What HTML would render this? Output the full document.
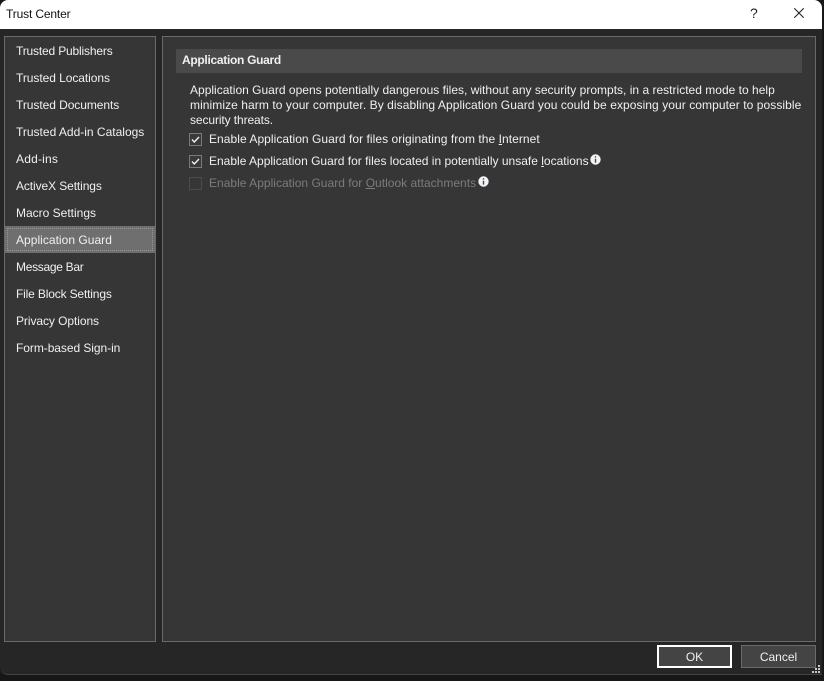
<!DOCTYPE html>
<html>
<head>
<meta charset="utf-8">
<style>
html,body{margin:0;padding:0;width:824px;height:681px;overflow:hidden;background:#171717;}
*{box-sizing:border-box;}
body{position:relative;font-family:"Liberation Sans",sans-serif;font-size:12px;color:#f0f0f0;}
.a{position:absolute;white-space:nowrap;}
.win{position:absolute;left:0;top:0;width:822px;height:675px;background:#262626;border-bottom:1px solid #444;border-radius:8px 8px 0 8px;overflow:hidden;}
.title{position:absolute;left:0;top:0;width:100%;height:29px;background:#fff;}
.panel{position:absolute;background:#363636;border:1px solid #6a6a6a;}
.nav{line-height:16px;}
.t{line-height:15px;}
.cb{position:absolute;width:13px;height:13px;border:1px solid #7a7a7a;background:#3a3a3a;}
u{text-underline-offset:1px;}
</style>
</head>
<body>
<div class="win">
  <div class="title"></div>
  <div class="a" style="left:6px;top:6px;color:#111;line-height:16px;letter-spacing:-.15px;">Trust Center</div>
  <div class="a" style="left:750px;top:5px;color:#222;font-size:14px;line-height:16px;">?</div>
  <svg class="a" style="left:794px;top:8px" width="10" height="10" viewBox="0 0 10 10"><path d="M.3.3 9.7 9.7M9.7.3.3 9.7" stroke="#222" stroke-width="1.1" fill="none"/></svg>

  <div class="panel" style="left:4px;top:36px;width:152px;height:606px;"></div>
  <div class="panel" style="left:162px;top:36px;width:654px;height:606px;"></div>

  <div class="a" style="left:5px;top:226px;width:150px;height:27px;background:#6f6f6f;"></div>
  <div class="a" style="left:7px;top:228px;width:146px;height:23px;border:1px dotted #949494;"></div>

  <div class="a nav" style="left:16px;top:43px;letter-spacing:-.17px;">Trusted Publishers</div>
  <div class="a nav" style="left:16px;top:70px;letter-spacing:-.06px;">Trusted Locations</div>
  <div class="a nav" style="left:16px;top:97px;letter-spacing:-.06px;">Trusted Documents</div>
  <div class="a nav" style="left:16px;top:124px;">Trusted Add-in Catalogs</div>
  <div class="a nav" style="left:16px;top:151px;letter-spacing:.2px;">Add-ins</div>
  <div class="a nav" style="left:16px;top:178px;letter-spacing:-.1px;">ActiveX Settings</div>
  <div class="a nav" style="left:16px;top:205px;">Macro Settings</div>
  <div class="a nav" style="left:16px;top:232px;letter-spacing:.03px;">Application Guard</div>
  <div class="a nav" style="left:16px;top:259px;letter-spacing:-.3px;">Message Bar</div>
  <div class="a nav" style="left:16px;top:286px;letter-spacing:-.16px;">File Block Settings</div>
  <div class="a nav" style="left:16px;top:313px;letter-spacing:-.07px;">Privacy Options</div>
  <div class="a nav" style="left:16px;top:340px;letter-spacing:-.06px;">Form-based Sign-in</div>

  <div class="a" style="left:176px;top:49px;width:626px;height:24px;background:#4a4a4a;"></div>
  <div class="a" style="left:182px;top:52px;line-height:16px;font-weight:bold;letter-spacing:-.3px;">Application Guard</div>

  <div class="a t" style="left:190px;top:83px;letter-spacing:.01px;">Application Guard opens potentially dangerous files, without any security prompts, in a restricted mode to help</div>
  <div class="a t" style="left:190px;top:98px;letter-spacing:.07px;">minimize harm to your computer. By disabling Application Guard you could be exposing your computer to possible</div>
  <div class="a t" style="left:190px;top:113px;letter-spacing:-.1px;">security threats.</div>

  <div class="cb" style="left:189px;top:133px;"></div>
  <svg class="a" style="left:189px;top:133px" width="13" height="13" viewBox="0 0 13 13"><path d="M3 6.5 5.3 9 10 4" stroke="#f2f2f2" stroke-width="1.4" fill="none"/></svg>
  <div class="a t" style="left:209px;top:132px;letter-spacing:.05px;">Enable Application Guard for files originating from the <u>I</u>nternet</div>

  <div class="cb" style="left:189px;top:155px;"></div>
  <svg class="a" style="left:189px;top:155px" width="13" height="13" viewBox="0 0 13 13"><path d="M3 6.5 5.3 9 10 4" stroke="#f2f2f2" stroke-width="1.4" fill="none"/></svg>
  <div class="a t" style="left:209px;top:154px;">Enable Application Guard for files located in potentially unsafe <u>l</u>ocations</div>
  <svg class="a" style="left:590px;top:154px" width="11" height="11" viewBox="0 0 11 11"><circle cx="5.5" cy="5.5" r="5.2" fill="#f4f4f4"/><path d="M5.5 2.2v1.4M5.5 4.8V8.6" stroke="#2a4a80" stroke-width="1.4"/></svg>

  <div class="cb" style="left:189px;top:177px;border-color:#4c4c4c;background:#363636;"></div>
  <div class="a t" style="left:209px;top:176px;color:#7c7c7c;letter-spacing:.02px;">Enable Application Guard for <u>O</u>utlook attachments</div>
  <svg class="a" style="left:478px;top:176px" width="11" height="11" viewBox="0 0 11 11"><circle cx="5.5" cy="5.5" r="5.2" fill="#f4f4f4"/><path d="M5.5 2.2v1.4M5.5 4.8V8.6" stroke="#2a4a80" stroke-width="1.4"/></svg>

  <div class="a" style="left:657px;top:645px;width:75px;height:23px;border:2px solid #fff;background:#444;text-align:center;line-height:21px;">OK</div>
  <div class="a" style="left:741px;top:645px;width:75px;height:23px;border:1px solid #6a6a6a;background:#444;text-align:center;line-height:23px;">Cancel</div>

  <svg class="a" style="left:812px;top:665px" width="10" height="10" viewBox="0 0 10 10" fill="#c8c8c8"><rect x="6" y="0" width="2" height="2"/><rect x="3" y="3" width="2" height="2"/><rect x="6" y="3" width="2" height="2"/><rect x="0" y="6" width="2" height="2"/><rect x="3" y="6" width="2" height="2"/><rect x="6" y="6" width="2" height="2"/></svg>
</div>
</body>
</html>
